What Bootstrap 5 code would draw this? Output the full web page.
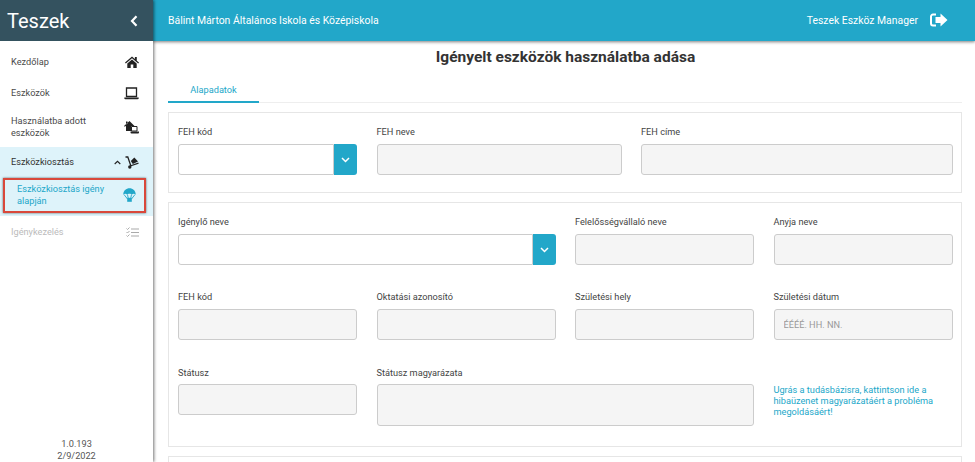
<!DOCTYPE html>
<html lang="hu">
<head>
<meta charset="utf-8">
<title>Teszek</title>
<link href="https://cdn.jsdelivr.net/npm/bootstrap@5.3.0/dist/css/bootstrap.min.css" rel="stylesheet">
<style>
html,body{height:462px;overflow:hidden}
body{font-family:Roboto,"Liberation Sans",sans-serif;font-size:9.2px;color:#444;background:#fff}
.shell{height:462px;overflow:hidden}
.side{width:153px;flex:none;box-shadow:1px 0 3px rgba(0,0,0,.55);z-index:3;background:#fff}
.side-head{height:41px;background:#34525f;color:#fff;padding:0 15px 0 7px}
.side-title{font-size:20px;line-height:1}
.mitem{padding:0 14px 0 11px;color:#4a4a4a;font-size:9.2px;line-height:12px}
.mitem svg{flex:none}
.m1{height:42px}
.m2{height:20px}
.m3{height:44px}
.m3 span{padding-top:3px}
.m4{height:30px;background:#def3fa;color:#333}
.sub-wrap{background:#def3fa;height:39px;padding:1px 7px 0 3px}
.sub-item{height:35px;border:2px solid #d9483b;box-shadow:0 0 2px rgba(0,0,0,.6);color:#22a7c9;padding:0 8px 2px 12px;line-height:11.5px}
.m6{height:32px;color:#bbb}
.version{line-height:11.5px;color:#555;padding-bottom:1px}
.main{min-width:0}
.top{height:41px;flex:none;background:#22a7c9;color:#fff;padding:0 27px 0 15px;font-size:10.4px;box-shadow:0 1px 3px rgba(0,0,0,.5);z-index:2}
.heading{font-size:15.5px;font-weight:700;color:#333;margin:0;padding:6px 0 0 3px;height:30px;line-height:20px;text-align:center;flex:none}
.tabs{margin:0 13px 0 15px;height:32px;flex:none;border-bottom:1px solid #eee}
.tab-on{width:91px;height:32px;border-bottom:2px solid #22a7c9;color:#22a7c9;text-align:center;line-height:37px;margin-bottom:-1px}
.panel-box{margin:9px 13px 0 15px;border:1px solid #e6e6e6;padding:9px 8px 0 9px;flex:none}
.p1{height:81px}
.p2{height:245px}
.p3{height:20px}
.g3{display:grid;grid-template-columns:179px 245px 312px;gap:0 19.5px;align-content:start}
.g4{display:grid;grid-template-columns:179px 179px 179px 179px;gap:0 19.5px;align-content:start}
.wide2{grid-column:span 2}
.fld label{display:block;height:22px;line-height:20px;color:#444;font-size:9.2px;margin:0}
.fld .form-control{height:31px;min-height:31px;border:1px solid #ccc;border-radius:3px;background:#f5f5f5;font-size:9.2px;padding:0 9px;box-shadow:none;color:#777}
.fld .form-control::placeholder{color:#999}
.fld .pick{background:#fff;border-top-right-radius:0;border-bottom-right-radius:0}
.arrow{width:23px;flex:none;background:#22a7c9;border-radius:0 3px 3px 0;height:31px}
.rowgap{margin-top:22px}
.lastrow label{line-height:21px}
.fld textarea.form-control{height:42px;resize:none}
.hint{color:#22a7c9;line-height:11.2px;padding-top:22px}
</style>
</head>
<body>
<div class="shell d-flex">
  <aside class="side d-flex flex-column">
    <div class="side-head d-flex align-items-center justify-content-between">
      <span class="side-title">Teszek</span>
      <svg width="8" height="12" viewBox="0 0 8 12"><path d="M6.5 1.2 2 6l4.500 4.800" fill="none" stroke="#fff" stroke-width="2.2"/></svg>
    </div>
    <div class="flex-grow-1">
      <div class="mitem m1 d-flex align-items-center justify-content-between">
        <span>Kezdőlap</span>
        <svg width="14" height="12" viewBox="0 0 14 12"><path d="M7 .5 0 6.600l.8.900L7 2.200l6.200 5.300.8-.9-2.200-1.900V1h-1.900v2L7 .5ZM2.300 7.500V12h3.400V8.600h2.600V12h3.400V7.500L7 3.500 2.300 7.500Z" fill="#222"/></svg>
      </div>
      <div class="mitem m2 d-flex align-items-center justify-content-between">
        <span>Eszközök</span>
        <svg width="15" height="13" viewBox="0 0 15 13"><path d="M2.500 1h10v8.500h-10z" fill="none" stroke="#222" stroke-width="1.300"/><path d="M.3 10.500h14.400v.8a1 1 0 0 1-1 1H1.300a1 1 0 0 1-1-1z" fill="#222"/></svg>
      </div>
      <div class="mitem m3 d-flex align-items-center justify-content-between">
        <span>Használatba adott<br>eszközök</span>
        <svg width="15" height="13" class="mt-1" viewBox="0 0 15 13"><path d="M2 .5h1.500v2L2 3.500zM5.500 0 0 5l.8.800L2 4.700V10H7V5H10.500z" fill="#222"/><path d="M7.500 5.500h5.500v4.500H7.500z" fill="#fff" stroke="#222"/><path d="M6.500 10.500H15v1a1 1 0 0 1-1 1H7.500a1 1 0 0 1-1-1z" fill="#222"/></svg>
      </div>
      <div class="mitem m4 d-flex align-items-center justify-content-between">
        <span>Eszközkiosztás</span>
        <span class="d-flex align-items-center gap-1">
          <svg width="7" height="5" viewBox="0 0 7 5"><path d="M.7 4 3.500 1.300 6.300 4" fill="none" stroke="#222" stroke-width="1.100"/></svg>
          <svg width="14" height="13" viewBox="0 0 14 13"><path d="M.5 1H2.800L5.800 9.800 13.500 7.200" fill="none" stroke="#222" stroke-width="1.300"/><circle cx="4.800" cy="11" r="1.700" fill="#222"/><path d="M5.800 5 9.300 1.500 13 5.500 7.800 8z" fill="#222"/></svg>
        </span>
      </div>
      <div class="sub-wrap">
        <div class="sub-item d-flex align-items-center justify-content-between">
          <span>Eszközkiosztás igény<br>alapján</span>
          <svg width="13" height="14" viewBox="0 0 13 14"><path d="M.3 6.500C.3 2.800 3.200.3 6.500.3s6.200 2.500 6.200 6.200C11.300 5.500 10 5.500 9 6.500 8 5.500 5 5.500 4 6.500 3 5.500 1.700 5.500.3 6.500Z" fill="#22a7c9"/><path d="m1 6.500 3.500 4.500M12 6.500 8.500 11M4.500 6.500l.8 4M8.500 6.500l-.8 4" stroke="#22a7c9" stroke-width=".9" fill="none"/><path d="M4.200 9.800h4.600v4H4.200z" fill="#22a7c9"/></svg>
        </div>
      </div>
      <div class="mitem m6 d-flex align-items-center justify-content-between">
        <span>Igénykezelés</span>
        <svg width="13" height="11" viewBox="0 0 13 11"><path d="M5 1.500h8v1H5zM5 5h8v1H5zM5 8.500h8v1H5z" fill="#aaa"/><path d="m.5 1.500 1 1 2-2M.5 5l1 1 2-2M.5 8.500l1 1 2-2" fill="none" stroke="#aaa"/></svg>
      </div>
    </div>
    <div class="version text-center">1.0.193<br>2/9/2022</div>
  </aside>
  <main class="main flex-grow-1 d-flex flex-column">
    <header class="top d-flex align-items-center justify-content-between">
      <span>Bálint Márton Általános Iskola és Középiskola</span>
      <span class="d-flex align-items-center gap-2">
        <span class="me-1">Teszek Eszköz Manager</span>
        <svg width="18" height="14" viewBox="0 0 18 14"><path d="M6 1.500H3A2 2 0 0 0 1 3.500v7a2 2 0 0 0 2 2h3" fill="none" stroke="#fff" stroke-width="2"/><path d="M10.500.5 17.500 7l-7 6.500V10H5.500V4h5z" fill="#fff"/></svg>
      </span>
    </header>
    <h1 class="heading">Igényelt eszközök használatba adása</h1>
    <div class="tabs"><div class="tab-on">Alapadatok</div></div>
    <section class="panel-box p1 g3">
      <div class="fld"><label>FEH kód</label>
        <div class="d-flex"><input class="form-control pick"><span class="arrow d-flex align-items-center justify-content-center"><svg width="9" height="6" viewBox="0 0 9 6"><path d="m1 1 3.500 3.500L8 1" fill="none" stroke="#fff" stroke-width="1.500"/></svg></span></div></div>
      <div class="fld"><label>FEH neve</label><input class="form-control"></div>
      <div class="fld"><label>FEH címe</label><input class="form-control"></div>
    </section>
    <section class="panel-box p2 g4">
      <div class="fld wide2"><label>Igénylő neve</label>
        <div class="d-flex"><input class="form-control pick"><span class="arrow d-flex align-items-center justify-content-center"><svg width="9" height="6" viewBox="0 0 9 6"><path d="m1 1 3.500 3.500L8 1" fill="none" stroke="#fff" stroke-width="1.500"/></svg></span></div></div>
      <div class="fld"><label>Felelősségvállaló neve</label><input class="form-control"></div>
      <div class="fld"><label>Anyja neve</label><input class="form-control"></div>
      <div class="fld rowgap"><label>FEH kód</label><input class="form-control"></div>
      <div class="fld rowgap"><label>Oktatási azonosító</label><input class="form-control"></div>
      <div class="fld rowgap"><label>Születési hely</label><input class="form-control"></div>
      <div class="fld rowgap"><label>Születési dátum</label><input class="form-control" placeholder="ÉÉÉÉ. HH. NN."></div>
      <div class="fld rowgap lastrow"><label>Státusz</label><input class="form-control"></div>
      <div class="fld rowgap lastrow wide2"><label>Státusz magyarázata</label><textarea class="form-control"></textarea></div>
      <div class="rowgap hint">Ugrás a tudásbázisra, kattintson ide a hibaüzenet magyarázatáért a probléma megoldásáért!</div>
    </section>
    <section class="panel-box p3"></section>
  </main>
</div>
<script src="https://cdn.jsdelivr.net/npm/bootstrap@5.3.0/dist/js/bootstrap.bundle.min.js"></script>
</body>
</html>
